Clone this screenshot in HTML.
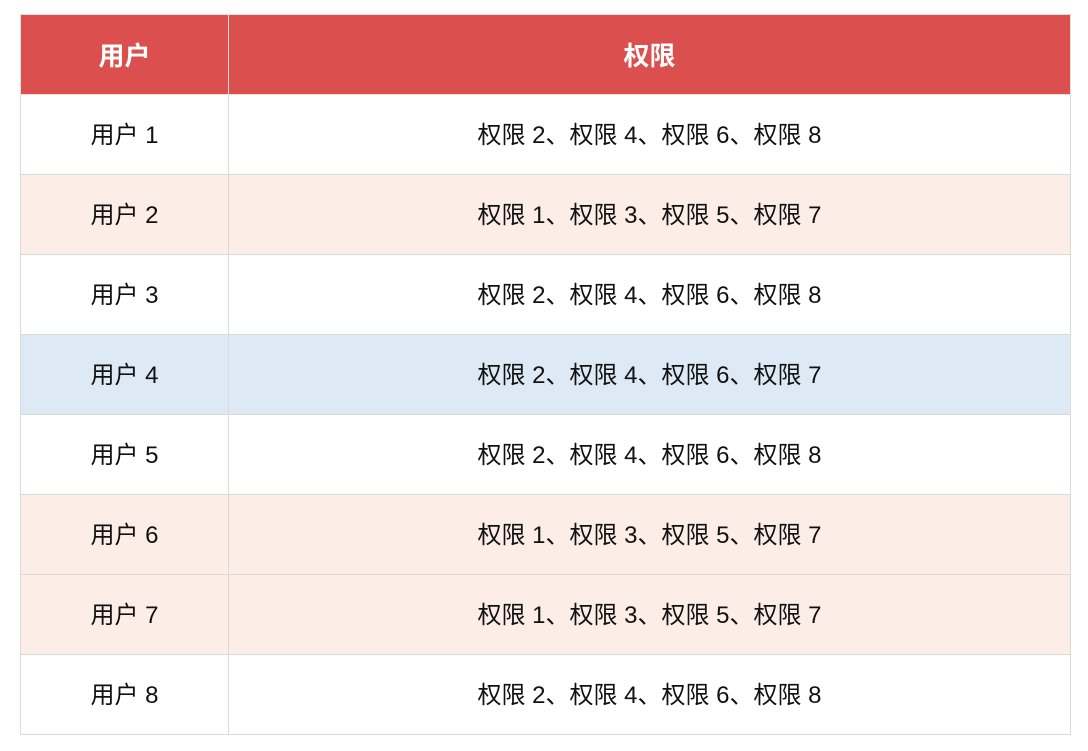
<!DOCTYPE html>
<html><head><meta charset="utf-8"><style>
body{margin:0;background:#fff;font-family:"Liberation Sans","Noto Sans CJK SC",sans-serif;}
table{position:absolute;left:20px;top:14px;width:1051px;border-collapse:collapse;table-layout:fixed;}
td,th{border:1px solid #dadada;height:76px;text-align:center;font-size:24px;line-height:24px;color:#111;padding:3px 0 0 0;font-weight:normal;}
th{background:#db4f4f;color:#fff;font-weight:bold;border-color:#e0e0e0;font-size:26px;line-height:26px;}
tr.p td{background:#fcede6;}
tr.b td{background:#dde9f5;}
</style></head><body>
<table>
<colgroup><col style="width:208px"><col></colgroup>
<tr><th>用户</th><th>权限</th></tr>
<tr><td>用户 1</td><td>权限 2、权限 4、权限 6、权限 8</td></tr>
<tr class="p"><td>用户 2</td><td>权限 1、权限 3、权限 5、权限 7</td></tr>
<tr><td>用户 3</td><td>权限 2、权限 4、权限 6、权限 8</td></tr>
<tr class="b"><td>用户 4</td><td>权限 2、权限 4、权限 6、权限 7</td></tr>
<tr><td>用户 5</td><td>权限 2、权限 4、权限 6、权限 8</td></tr>
<tr class="p"><td>用户 6</td><td>权限 1、权限 3、权限 5、权限 7</td></tr>
<tr class="p"><td>用户 7</td><td>权限 1、权限 3、权限 5、权限 7</td></tr>
<tr><td>用户 8</td><td>权限 2、权限 4、权限 6、权限 8</td></tr>
</table>
</body></html>
